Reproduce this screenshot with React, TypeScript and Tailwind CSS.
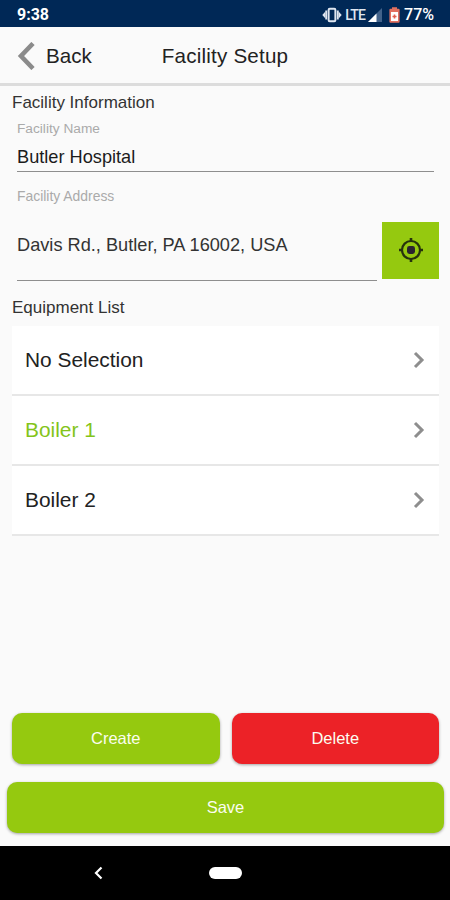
import { clsx } from 'clsx';

const equipment = [
  { name: 'No Selection', selected: false },
  { name: 'Boiler 1', selected: true },
  { name: 'Boiler 2', selected: false },
];

function StatusBar() {
  return (
    <div className="flex h-[27px] items-center bg-[#002856] pt-[3px] pr-[16px] pl-[17px] font-['Roboto',sans-serif] text-white">
      <span className="text-[16px] leading-6 font-bold">9:38</span>
      <svg className="ml-auto h-[16px] w-[20px]" viewBox="0 0 20 16" fill="none">
        <rect x="6.6" y="1.8" width="6.8" height="12.4" rx="1.2" stroke="#dfe6f0" strokeWidth="2" />
        <path d="M4.2 3.6v8.8M15.800 3.600v8.800" stroke="#dfe6f0" strokeWidth="1.8" />
        <path d="M3.400 4.500 0.300 8l3.100 3.500zM16.600 4.500 19.700 8l-3.100 3.500z" fill="#dfe6f0" />
      </svg>
      <span className="ml-[3px] text-[14px] leading-6 font-medium tracking-[-0.8px] text-[#dfe6f0]">LTE</span>
      <svg className="ml-[3px] h-[14px] w-[14px]" viewBox="0 0 14 14">
        <path d="M14 0v14H0z" fill="#42628a" />
        <path d="M8.500 5.500v8.500H0z" fill="#fff" />
      </svg>
      <svg className="ml-[7px] h-[16px] w-[11px]" viewBox="0 0 11 16">
        <path d="M3 1.700V0.300h5v1.400h1.600q1 0 1 1v12q0 1-1 1H1.400q-1 0-1-1v-12q0-1 1-1z" fill="#e2705f" />
        <path d="M2 5h7v9H2z" fill="#fff" />
        <path d="M5.500 7.500v4M3.500 9.500h4" stroke="#e2604f" strokeWidth="1.600" />
      </svg>
      <span className="ml-[4px] text-[16px] leading-6 font-medium">77%</span>
    </div>
  );
}

function Header() {
  return (
    <header className="grid h-[59px] grid-cols-[1fr_auto_1fr] items-center border-b-[3px] border-[#dcdcdc] pt-[3px] pr-[17px] pl-[17px] text-[#222]">
      <button className="flex items-center gap-[11px] text-[20.6px]">
        <svg className="h-[28px] w-[18px]" viewBox="0 0 18 28" fill="none">
          <path d="M16 1.500 4 14l12 12.500" stroke="#8b8b8b" strokeWidth="4.600" />
        </svg>
        Back
      </button>
      <h1 className="text-[20.6px] tracking-[0.2px]">Facility Setup</h1>
    </header>
  );
}

function ChevronRight() {
  return (
    <svg className="h-[18px] w-[12px]" viewBox="0 0 12 18" fill="none">
      <path d="M2 2l7 7-7 7" stroke="#8e8e8e" strokeWidth="3" />
    </svg>
  );
}

function LocateIcon() {
  return (
    <svg className="h-[26px] w-[26px]" viewBox="0 0 26 26" fill="none">
      <circle cx="13" cy="13" r="9" stroke="#26330c" strokeWidth="2.2" />
      <path d="M13 1v4M13 21v4M1 13h4M21 13h4" stroke="#26330c" strokeWidth="2.6" />
      <rect x="9" y="9" width="8" height="8" rx="2.4" fill="#2a2430" />
    </svg>
  );
}

export default function App() {
  return (
    <div className="flex h-[900px] w-[450px] flex-col bg-[#fafafa] font-['Liberation_Sans',Arial,sans-serif]">
      <StatusBar />
      <Header />
      <main className="flex flex-1 flex-col pr-[11px] pl-[12px]">
        <h2 className="mt-[6px] text-[17px] leading-[22px] text-[#333]">Facility Information</h2>
        <div className="mr-[5px] ml-[5px] flex h-[58px] flex-col border-b border-[#8e8e8e]">
          <label className="mt-[5px] text-[13.7px] leading-[20px] text-[#aaa]">Facility Name</label>
          <span className="mt-[6px] text-[18.2px] leading-[24px] text-[#1c1c1c]">Butler Hospital</span>
        </div>
        <div className="mt-[14px] flex h-[95px] justify-between pl-[5px]">
          <div className="flex w-[360px] flex-col border-b border-[#8e8e8e]">
            <label className="text-[13.9px] leading-[20px] text-[#aaa]">Facility Address</label>
            <span className="mt-[27px] text-[18.2px] leading-[24px] text-[#333]">Davis Rd., Butler, PA 16002, USA</span>
          </div>
          <button className="mt-[36px] flex h-[57px] w-[57px] items-center justify-center bg-[#95c90f] pb-[2px]">
            <LocateIcon />
          </button>
        </div>
        <h2 className="mt-[16px] text-[17px] leading-[22px] text-[#333]">Equipment List</h2>
        <ul className="mt-[7px]">
          {equipment.map((item) => (
            <li
              key={item.name}
              className={clsx(
                'flex h-[70px] items-center justify-between border-b-2 border-[#e7e7e7] bg-white pr-[14px] pl-[13px] text-[20.9px]',
                item.selected ? 'text-[#84c41a]' : 'text-[#222]',
              )}
            >
              {item.name}
              <ChevronRight />
            </li>
          ))}
        </ul>
        <div className="mt-auto grid grid-cols-2 gap-[12px] text-[16.5px] text-[#fbfdf0]">
          <button className="h-[51px] rounded-[10px] bg-[#95c90f] shadow-[0_1px_3px_rgba(0,0,0,0.35)]">Create</button>
          <button className="h-[51px] rounded-[10px] bg-[#ec2227] shadow-[0_1px_3px_rgba(0,0,0,0.35)]">Delete</button>
        </div>
        <button className="-mx-[5px] mt-[18px] mb-[13px] h-[51px] rounded-[10px] bg-[#95c90f] text-[16.5px] text-[#fbfdf0] shadow-[0_1px_3px_rgba(0,0,0,0.35)]">
          Save
        </button>
      </main>
      <nav className="grid h-[54px] grid-cols-[1fr_34px_1fr] items-center bg-black">
        <svg className="ml-[93px] h-[14px] w-[10px]" viewBox="0 0 10 14" fill="none">
          <path d="M8.500 1.500 3 7l5.500 5.500" stroke="#fff" strokeWidth="2.200" />
        </svg>
        <div className="ml-px h-[12px] w-[33px] rounded-full bg-white" />
      </nav>
    </div>
  );
}
